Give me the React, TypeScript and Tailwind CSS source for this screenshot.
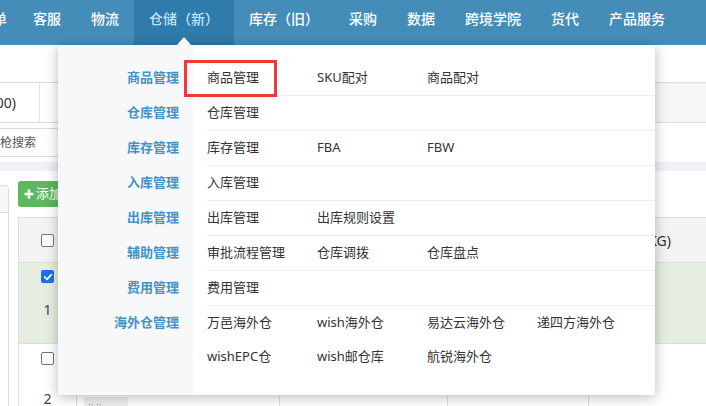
import React from "react";

const FONT = '"Noto Sans", "Noto Sans CJK SC", sans-serif';

const navItems = ["订单", "客服", "物流", "仓储（新）", "库存（旧）", "采购", "数据", "跨境学院", "货代", "产品服务"];

const groups: { label: string; lines: string[][] }[] = [
  { label: "商品管理", lines: [["商品管理", "SKU配对", "商品配对"]] },
  { label: "仓库管理", lines: [["仓库管理"]] },
  { label: "库存管理", lines: [["库存管理", "FBA", "FBW"]] },
  { label: "入库管理", lines: [["入库管理"]] },
  { label: "出库管理", lines: [["出库管理", "出库规则设置"]] },
  { label: "辅助管理", lines: [["审批流程管理", "仓库调拨", "仓库盘点"]] },
  { label: "费用管理", lines: [["费用管理"]] },
  {
    label: "海外仓管理",
    lines: [
      ["万邑海外仓", "wish海外仓", "易达云海外仓", "递四方海外仓"],
      ["wishEPC仓", "wish邮仓库", "航锐海外仓"],
    ],
  },
];

function Box({ checked }: { checked?: boolean }) {
  if (checked) {
    return (
      <div className="w-[13px] h-[13px] rounded-[2px] bg-[#1a73e8] flex items-center justify-center">
        <svg width="10" height="10" viewBox="0 0 10 10">
          <path d="M1.8 5.2 L4 7.3 L8.3 2.6" stroke="white" strokeWidth="1.8" fill="none" strokeLinecap="round" strokeLinejoin="round" />
        </svg>
      </div>
    );
  }
  return <div className="w-[13px] h-[13px] rounded-[2px] border border-[#767676] bg-white" />;
}

export default function App() {
  return (
    <div className="relative w-[706px] h-[406px] overflow-hidden bg-white text-[#333]" style={{ fontFamily: FONT }}>
      {/* top nav */}
      <nav className="h-[45px] bg-[#458db9] flex text-[14px] font-medium text-white whitespace-nowrap">
        {navItems.map((t, i) => {
          const active = i === 3;
          return (
            <div
              key={t}
              className={
                (i === 0 ? "ml-[-36px] pl-[15px] pr-[11px] " : "px-[15px] ") +
                "relative h-[45px] pt-[10px] leading-[18px] shrink-0 " +
                (active ? "bg-[#2f7bab] text-[#bfe4f8]" : "")
              }
            >
              {t}
              {active && (
                <div className="absolute bottom-0 left-1/2 -translate-x-1/2 w-0 h-0 border-l-[7px] border-r-[7px] border-b-[8px] border-l-transparent border-r-transparent border-b-white z-20" />
              )}
            </div>
          );
        })}
      </nav>

      {/* page header */}
      <div className="h-[38px] border-b border-[#dddddd]" />

      {/* summary row */}
      <div className="h-[40px] border-b border-[#dddddd] flex">
        <div className="w-[40px] border-r border-[#e3e3e3] flex items-center justify-end pr-[23px] text-[14px] whitespace-nowrap">
          (100)
        </div>
        <div className="flex-1" />
        <div className="w-[120px] bg-[#f6f6f6] border-l border-[#e3e3e3]" />
      </div>

      {/* search row */}
      <div className="h-[39px] flex items-center">
        <div className="ml-[-30px] pl-[5px] w-[330px] h-[29px] border border-[#dcdcdc] flex items-center text-[12px] text-[#555] whitespace-nowrap">
          扫描枪搜索
        </div>
      </div>
      <div className="h-[9px] bg-[#eef1f5]" />

      {/* content */}
      <div className="flex">
        <div className="w-[9px] mt-[14px] h-[240px] border border-l-0 border-[#dddddd] rounded-tr-[4px]">
          <div className="h-[27px] border-b border-[#dddddd] bg-[#f7f7f7]" />
        </div>
        <div className="ml-[9px] flex-1">
          <div className="mt-[10px] h-[26px] w-[70px] rounded-[3px] bg-[#5cb85c] text-white text-[13px] flex items-center pl-[6px] gap-[2px]">
            <svg width="10" height="10" viewBox="0 0 10 10">
              <path d="M5 0.5 V9.5 M0.5 5 H9.5" stroke="white" strokeWidth="2.6" />
            </svg>
            <span>添加</span>
          </div>
          <div className="mt-[10px] border-l border-t border-[#dddddd]">
            {/* header */}
            <div className="h-[45px] bg-[#f3f3f3] border-b border-[#dddddd] flex text-[14px]">
              <div className="w-[58px] border-r border-[#e0e0e0] flex items-center justify-center">
                <Box />
              </div>
              <div className="w-[203px] border-r border-[#e0e0e0]" />
              <div className="w-[168px] border-r border-[#e0e0e0]" />
              <div className="w-[141px] border-r border-[#e0e0e0]" />
              <div className="flex-1 flex items-center pl-[27px] whitespace-nowrap text-[#333]">重量(KG)</div>
            </div>
            {/* row 1 */}
            <div className="h-[81px] bg-[#e5eee1] border-b border-[#dddddd] flex text-[14px]">
              <div className="w-[58px] border-r border-[#e0e0e0] flex flex-col items-center pt-[7px]">
                <Box checked />
                <div className="mt-[17px] leading-[20px] text-[#444]">1</div>
              </div>
              <div className="w-[203px] border-r border-[#e0e0e0]" />
              <div className="w-[168px] border-r border-[#e0e0e0]" />
              <div className="w-[141px] border-r border-[#e0e0e0]" />
              <div className="flex-1" />
            </div>
            {/* row 2 */}
            <div className="h-[80px] flex text-[14px]">
              <div className="w-[58px] border-r border-[#e0e0e0] flex flex-col items-center pt-[8px]">
                <Box />
                <div className="mt-[24px] leading-[20px] text-[#444]">2</div>
              </div>
              <div className="w-[203px] border-r border-[#e0e0e0] pl-[7px] pt-[53px]">
                <div className="w-[44px] h-[14px] bg-[#eeeeee] text-[10px] leading-[14px] text-[#999] pl-[4px]">·· ··</div>
              </div>
              <div className="w-[168px] border-r border-[#e0e0e0]" />
              <div className="w-[141px] border-r border-[#e0e0e0]" />
              <div className="flex-1" />
            </div>
          </div>
        </div>
      </div>

      {/* dropdown mega menu */}
      <div className="absolute left-[58px] top-[45px] w-[597px] h-[350px] bg-white shadow-[0_2px_12px_rgba(0,0,0,0.28)] flex z-10">
        <div className="w-[135px] bg-[#f7f8fa] pt-[16px]">
          {groups.map((g, i) => (
            <div
              key={g.label}
              className={
                (i === groups.length - 1 ? "h-[34px] " : "h-[35px] pb-[1px] ") +
                "flex items-center justify-end pr-[14px] text-[13px] font-bold text-[#4592c4] whitespace-nowrap"
              }
            >
              {g.label}
            </div>
          ))}
        </div>
        <div className="flex-1 pt-[16px] pl-[14px]">
          {groups.map((g, i) => (
            <div key={g.label} className={i === groups.length - 1 ? "" : "border-b border-[#eeeeee]"}>
              {g.lines.map((line, j) => (
                <div key={j} className="h-[34px] flex items-center text-[13px] text-[#333] whitespace-nowrap">
                  {line.map((it) => (
                    <div key={it} className="w-[110px] shrink-0">
                      {it}
                    </div>
                  ))}
                </div>
              ))}
            </div>
          ))}
        </div>
        <div className="absolute left-[126px] top-[15px] w-[93px] h-[37px] border-[3px] border-[#f03a3a]" />
      </div>
    </div>
  );
}
